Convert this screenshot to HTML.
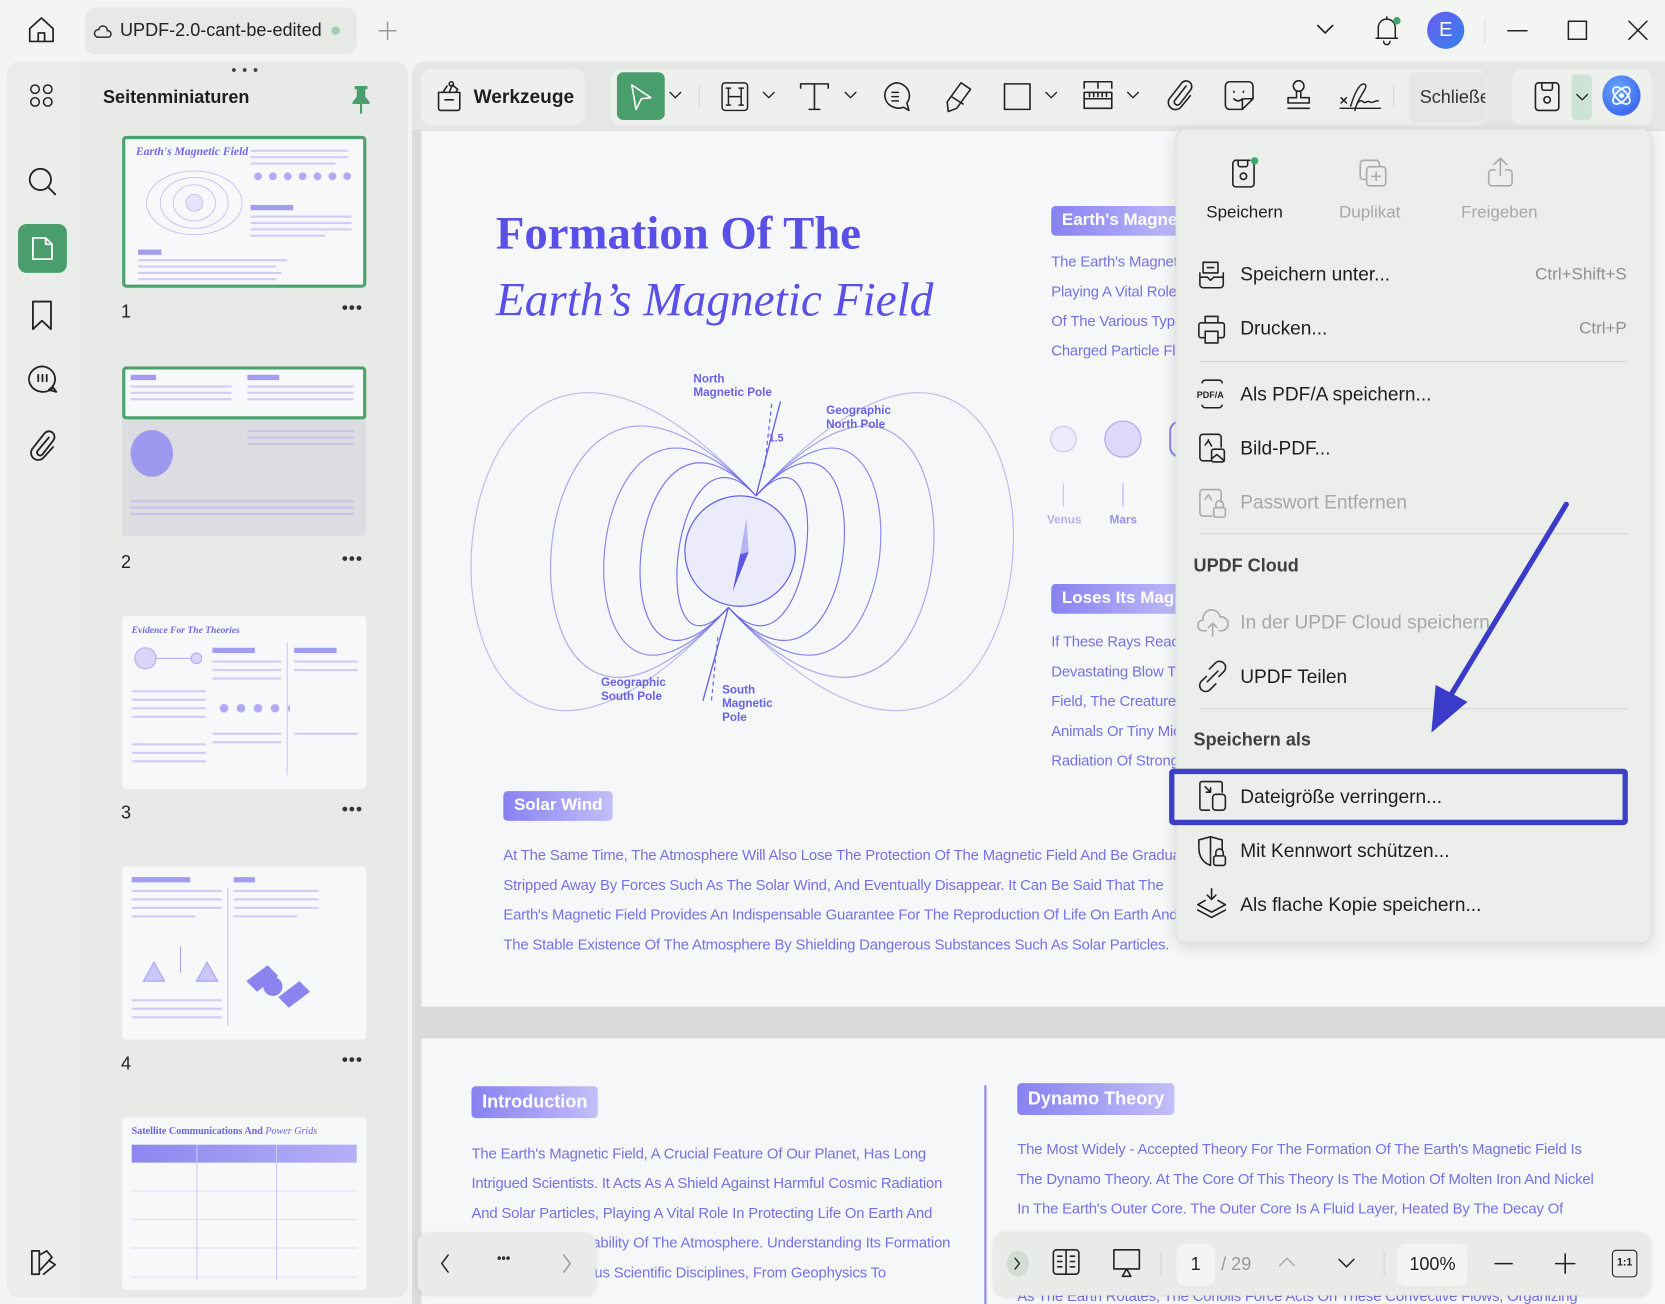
<!DOCTYPE html>
<html><head><meta charset="utf-8">
<style>
*{margin:0;padding:0;box-sizing:border-box}
html,body{width:1665px;height:1304px;overflow:hidden;background:#f3f5f3;font-family:"Liberation Sans",sans-serif}
#w{position:absolute;left:0;top:0;width:1568px;height:1228px;transform:scale(1.06186);transform-origin:0 0;background:#f3f5f3;overflow:hidden}
.a{position:absolute}
.ic{position:absolute;fill:none;stroke:#222;stroke-width:1.6;stroke-linecap:round;stroke-linejoin:round}
.pt{color:#7770e6;font-size:14px;letter-spacing:-0.15px;position:absolute;white-space:nowrap}
.badge{position:absolute;color:#fff;font-weight:bold;font-size:16px;border-radius:4px;padding:5px 10px;background:linear-gradient(90deg,#8881f2,#c3bff8);white-space:nowrap;overflow:hidden}
.mi{position:absolute;left:1168px;font-size:18px;color:#1e1e1e;white-space:nowrap}
.dis{color:#a5a8a5}
.sc{position:absolute;right:36px;font-size:16px;color:#8d908d}
.th{position:absolute;left:115px;width:230px;background:#f7f8fa;border-radius:4px;overflow:hidden}
.num{position:absolute;left:114px;font-size:17px;color:#222}
.dots{position:absolute;left:322px;font-size:16px;font-weight:bold;color:#333;letter-spacing:1px}
.tl{position:absolute;height:2px;background:#cfcdf5}
</style></head><body>
<div id="w">
<!-- top bar -->
<svg class="ic" style="left:25px;top:14px" width="28" height="28" viewBox="0 0 28 28"><path d="M3 13 L14 3 L25 13 V25 H3 Z M11 25 V17 H17 V25"/></svg>
<div class="a" style="left:80px;top:7px;width:256px;height:44px;background:#e6e9e6;border-radius:10px"></div>
<svg class="ic" style="left:88px;top:20px;stroke-width:1.3" width="18" height="18" viewBox="0 0 18 18"><path d="M4 15 H14 A3 3 0 0 0 13 9 A4 4 0 0 0 5 8 A3.5 3.5 0 0 0 4 15Z"/></svg>
<div class="a" style="left:113px;top:19px;font-size:17px;color:#222">UPDF-2.0-cant-be-edited</div>
<div class="a" style="left:312px;top:25px;width:8px;height:8px;border-radius:50%;background:#9ccfae"></div>
<svg class="ic" style="left:355px;top:19px;stroke:#999;stroke-width:1.4" width="20" height="20"><path d="M10 2V18M2 10H18"/></svg>
<svg class="ic" style="left:1239px;top:22px" width="18" height="12"><path d="M2 2 L9 9 L16 2"/></svg>
<svg class="ic" style="left:1293px;top:13px;stroke-width:1.4" width="26" height="32"><path d="M5 23 V13 A8 8 0 0 1 21 13 V23 Z M3 23 H23 M10 26 A3 3 0 0 0 16 26 M13 3V5"/></svg>
<div class="a" style="left:1312px;top:16px;width:7px;height:7px;border-radius:50%;background:#3caa6c"></div>
<div class="a" style="left:1344px;top:11px;width:35px;height:35px;border-radius:50%;background:linear-gradient(135deg,#6b5af2,#3483e8);color:#fff;text-align:center;line-height:35px;font-size:19px">E</div>
<div class="a" style="left:1398px;top:18px;width:1px;height:22px;background:#ddd"></div>
<svg class="ic" style="left:1418px;top:18px;stroke-width:1.4" width="22" height="22"><path d="M2 11H20"/></svg>
<svg class="ic" style="left:1475px;top:18px;stroke-width:1.4" width="22" height="22"><rect x="2" y="2" width="17" height="17"/></svg>
<svg class="ic" style="left:1532px;top:18px;stroke-width:1.4" width="22" height="22"><path d="M2 2L19 19M19 2L2 19"/></svg>

<!-- left panel -->
<div class="a" style="left:6px;top:58px;width:378px;height:1164px;background:#e7eae7;border-radius:12px"></div>
<div class="a" style="left:6px;top:58px;width:70px;height:1164px;background:#eaedea;border-radius:12px 0 0 12px"></div>
<svg class="ic" style="left:27px;top:78px;stroke-width:1.4" width="26" height="26"><rect x="2" y="2" width="8" height="8" rx="4"/><rect x="14" y="2" width="8" height="8" rx="4"/><rect x="2" y="14" width="8" height="8" rx="4"/><rect x="14" y="14" width="8" height="8" rx="4"/></svg>
<svg class="ic" style="left:25px;top:156px;stroke-width:1.7" width="30" height="30"><circle cx="13" cy="13" r="10"/><path d="M20 20L27 27"/></svg>
<div class="a" style="left:17px;top:211px;width:46px;height:46px;background:#4a9e6b;border-radius:8px"></div>
<svg class="ic" style="left:28px;top:221px;stroke:#fff;stroke-width:1.7" width="24" height="26"><path d="M3 3 H15 L21 9 V23 H3 Z M15 3 V9 H21"/></svg>
<svg class="ic" style="left:29px;top:282px;stroke-width:1.7" width="22" height="30"><path d="M2 2 H19 V28 L10.5 20 L2 28 Z"/></svg>
<svg class="ic" style="left:24px;top:342px;stroke-width:1.7" width="32" height="30"><path d="M16 3 A13 12 0 1 0 26 23 L29 27 L22 25 A13 12 0 0 0 16 3Z M12 11V17 M16 11V17 M20 11V17"/></svg>
<svg class="ic" style="left:26px;top:404px;stroke-width:1.7" width="28" height="30"><path d="M20 8 L9 21 A3 3 0 0 0 14 24 L24 11 A5 5 0 0 0 16 4 L5 18 A6.5 6.5 0 0 0 15 27 L24 17"/></svg>
<svg class="ic" style="left:27px;top:1175px;stroke-width:1.6" width="28" height="28"><path d="M3 3 H10 V25 H3 Z M10 7 L17 3 L22 9 L10 22 M14 25 L25 16 L19 12"/></svg>

<div class="a" style="left:218px;top:58px;font-size:13px;font-weight:bold;color:#444;letter-spacing:1px">• • •</div>
<div class="a" style="left:97px;top:82px;font-size:17px;font-weight:bold;color:#1e1e1e">Seitenminiaturen</div>
<svg class="a" style="left:329px;top:79px" width="22" height="30"><path d="M5 2 H17 V5 H15 V12 L19 17 V19 H3 V17 L7 12 V5 H5Z" fill="#4a9e6b"/><path d="M11 19V28" stroke="#4a9e6b" stroke-width="2"/></svg>

<!-- thumbnails -->
<div class="th" style="top:128px;height:143px;border:3px solid #4aa36d">
 <div class="a" style="left:10px;top:6px;font-family:'Liberation Serif',serif;font-style:italic;font-weight:bold;color:#7068e6;font-size:11px">Earth's Magnetic Field</div>
 <svg class="a" style="left:15px;top:20px" width="100" height="80"><g fill="none" stroke="#bab6f3" stroke-width=".7"><ellipse cx="50" cy="40" rx="45" ry="30"/><ellipse cx="50" cy="40" rx="32" ry="24"/><ellipse cx="50" cy="40" rx="20" ry="17"/><circle cx="50" cy="40" r="8" fill="#e6e4fb"/></g></svg>
 <div class="tl" style="left:118px;top:10px;width:92px"></div><div class="tl" style="left:118px;top:16px;width:92px"></div><div class="tl" style="left:118px;top:22px;width:80px"></div>
 <div class="a" style="left:118px;top:30px;width:100px;height:10px;background:radial-gradient(circle,#b0abf3 40%,transparent 45%) 0 0/14px 10px"></div>
 <div class="a" style="left:118px;top:62px;width:40px;height:5px;background:#a39df2"></div>
 <div class="tl" style="left:118px;top:72px;width:95px"></div><div class="tl" style="left:118px;top:78px;width:95px"></div><div class="tl" style="left:118px;top:84px;width:95px"></div><div class="tl" style="left:118px;top:90px;width:70px"></div>
 <div class="a" style="left:12px;top:104px;width:22px;height:5px;background:#a39df2"></div>
 <div class="tl" style="left:12px;top:113px;width:140px"></div><div class="tl" style="left:12px;top:119px;width:130px"></div><div class="tl" style="left:12px;top:125px;width:135px"></div><div class="tl" style="left:12px;top:131px;width:130px"></div>
</div>
<div class="num" style="top:284px">1</div><div class="dots" style="top:282px">•••</div>

<div class="th" style="top:345px;height:160px;background:#dcdde0">
 <div class="a" style="left:0;top:0;width:230px;height:50px;background:#f7f8fa;border:3px solid #4aa36d;border-radius:4px"></div>
 <div class="a" style="left:8px;top:8px;width:24px;height:5px;background:#a39df2"></div><div class="a" style="left:118px;top:8px;width:30px;height:5px;background:#a39df2"></div>
 <div class="tl" style="left:8px;top:18px;width:95px"></div><div class="tl" style="left:8px;top:24px;width:95px"></div><div class="tl" style="left:8px;top:30px;width:95px"></div><div class="tl" style="left:118px;top:18px;width:100px"></div><div class="tl" style="left:118px;top:24px;width:100px"></div><div class="tl" style="left:118px;top:30px;width:100px"></div>
 <div class="a" style="left:8px;top:60px;width:40px;height:44px;border-radius:50%;background:#9e98ee"></div>
 <div class="tl" style="left:118px;top:60px;width:100px;background:#c5c3e8"></div><div class="tl" style="left:118px;top:66px;width:100px;background:#c5c3e8"></div><div class="tl" style="left:118px;top:72px;width:100px;background:#c5c3e8"></div>
 <div class="tl" style="left:8px;top:126px;width:210px;background:#c5c3e8"></div><div class="tl" style="left:8px;top:132px;width:210px;background:#c5c3e8"></div><div class="tl" style="left:8px;top:138px;width:210px;background:#c5c3e8"></div>
</div>
<div class="num" style="top:520px">2</div><div class="dots" style="top:518px">•••</div>

<div class="th" style="top:580px;height:163px">
 <div class="a" style="left:9px;top:8px;font-family:'Liberation Serif',serif;font-style:italic;font-weight:bold;color:#7068e6;font-size:9px">Evidence For The Theories</div>
 <svg class="a" style="left:10px;top:25px" width="70" height="30"><g stroke="#b0abf3" fill="#d9d6fa"><circle cx="12" cy="15" r="10"/><circle cx="60" cy="15" r="5"/><path d="M22 15H55"/></g></svg>
 <div class="tl" style="left:9px;top:70px;width:70px"></div><div class="tl" style="left:9px;top:78px;width:70px"></div><div class="tl" style="left:9px;top:86px;width:70px"></div><div class="tl" style="left:9px;top:94px;width:70px"></div><div class="tl" style="left:9px;top:120px;width:70px"></div><div class="tl" style="left:9px;top:128px;width:70px"></div><div class="tl" style="left:9px;top:136px;width:70px"></div>
 <div class="a" style="left:85px;top:30px;width:40px;height:5px;background:#a39df2"></div><div class="a" style="left:162px;top:30px;width:40px;height:5px;background:#a39df2"></div>
 <div class="tl" style="left:85px;top:42px;width:65px"></div><div class="tl" style="left:85px;top:50px;width:65px"></div><div class="tl" style="left:85px;top:58px;width:65px"></div><div class="tl" style="left:162px;top:42px;width:60px"></div><div class="tl" style="left:162px;top:50px;width:60px"></div>
 <div class="a" style="left:88px;top:82px;width:70px;height:10px;background:radial-gradient(circle,#b0abf3 40%,transparent 45%) 0 0/16px 10px"></div>
 <div class="tl" style="left:85px;top:110px;width:65px"></div><div class="tl" style="left:85px;top:118px;width:65px"></div><div class="tl" style="left:162px;top:110px;width:60px"></div>
 <div class="a" style="left:155px;top:25px;width:1px;height:125px;background:#c9c6f5"></div>
</div>
<div class="num" style="top:756px">3</div><div class="dots" style="top:754px">•••</div>

<div class="th" style="top:816px;height:163px">
 <div class="a" style="left:9px;top:10px;width:55px;height:5px;background:#a39df2"></div><div class="a" style="left:105px;top:10px;width:20px;height:5px;background:#a39df2"></div>
 <div class="tl" style="left:9px;top:22px;width:85px"></div><div class="tl" style="left:9px;top:30px;width:85px"></div><div class="tl" style="left:9px;top:38px;width:85px"></div><div class="tl" style="left:9px;top:46px;width:60px"></div>
 <div class="tl" style="left:105px;top:22px;width:80px"></div><div class="tl" style="left:105px;top:30px;width:80px"></div><div class="tl" style="left:105px;top:38px;width:80px"></div><div class="tl" style="left:105px;top:46px;width:60px"></div>
 <svg class="a" style="left:15px;top:70px" width="80" height="40"><g stroke="#a8a3f2" fill="#c9c6f8"><path d="M5 38 L15 20 L25 38Z M55 38 L65 20 L75 38Z M40 5 V30"/></g></svg>
 <div class="tl" style="left:9px;top:125px;width:85px"></div><div class="tl" style="left:9px;top:133px;width:85px"></div><div class="tl" style="left:9px;top:141px;width:85px"></div>
 <div class="a" style="left:99px;top:20px;width:1px;height:130px;background:#c9c6f5"></div>
 <svg class="a" style="left:112px;top:88px" width="70" height="60"><g fill="#8b84ee"><path d="M5 20 L25 5 L35 15 L15 30Z M35 35 L55 20 L65 30 L45 45Z"/><circle cx="30" cy="25" r="9"/></g></svg>
</div>
<div class="num" style="top:992px">4</div><div class="dots" style="top:990px">•••</div>

<div class="th" style="top:1052px;height:163px">
 <div class="a" style="left:9px;top:9px;font-family:'Liberation Serif',serif;font-weight:bold;color:#6d64e6;font-size:9.5px">Satellite Communications And <i style="font-weight:normal">Power Grids</i></div>
 <div class="a" style="left:9px;top:26px;width:212px;height:17px;background:linear-gradient(90deg,#8d86f0,#b5b0f7)"></div>
 <div class="a" style="left:9px;top:43px;width:212px;height:112px;background:repeating-linear-gradient(180deg,#f7f8fa 0,#f7f8fa 26px,#dedcf8 26px,#dedcf8 27px)"></div>
 <div class="a" style="left:70px;top:26px;width:1px;height:128px;background:#cdcaf6"></div><div class="a" style="left:145px;top:26px;width:1px;height:128px;background:#cdcaf6"></div>
</div>

<!-- main area -->
<div class="a" style="left:388px;top:58px;width:1180px;height:1170px;background:#dadcda;border-radius:12px 0 0 0"></div>
<div class="a" style="left:388px;top:58px;width:1180px;height:64px;background:#e4e7e4;border-radius:12px 0 0 0"></div>
<div class="a" style="left:396px;top:65px;width:155px;height:53px;background:#eef0ee;border-radius:10px"></div>
<svg class="ic" style="left:409px;top:75px;stroke-width:1.5" width="30" height="32"><path d="M4 12 H24 V27 A2 2 0 0 1 22 29 H6 A2 2 0 0 1 4 27 Z M10 19 H18 M8 12 L12 6 M14 12 L17 5 L22 9 L20 12"/><circle cx="16" cy="4" r="2"/></svg>
<div class="a" style="left:446px;top:81px;font-size:18px;font-weight:bold;color:#1e1e1e">Werkzeuge</div>
<div class="a" style="left:575px;top:65px;width:825px;height:53px;background:#eef0ee;border-radius:10px"></div>
<div class="a" style="left:581px;top:68px;width:45px;height:45px;background:#4a9e6b;border-radius:6px"></div>
<svg class="ic" style="left:591px;top:77px;stroke:#fff;stroke-width:1.5" width="26" height="28"><path d="M4 3 L22 15 L13 16 L8 26 Z"/></svg>
<svg class="ic" style="left:630px;top:86px;stroke-width:1.3" width="12" height="8"><path d="M1 1L6 6L11 1"/></svg>
<div class="a" style="left:658px;top:80px;width:1px;height:22px;background:#d6d8d6"></div>
<svg class="ic" style="left:678px;top:76px;stroke-width:1.4" width="28" height="30"><rect x="2" y="2" width="24" height="26" rx="3"/><path d="M8 7V23M20 7V23M8 15H20M6 7H10M18 7H22M6 23H10M18 23H22"/></svg>
<svg class="ic" style="left:718px;top:86px;stroke-width:1.3" width="12" height="8"><path d="M1 1L6 6L11 1"/></svg>
<svg class="ic" style="left:752px;top:77px;stroke-width:1.5" width="30" height="28"><path d="M2 6V2H28V6M15 2V26M10 26H20"/></svg>
<svg class="ic" style="left:795px;top:86px;stroke-width:1.3" width="12" height="8"><path d="M1 1L6 6L11 1"/></svg>
<svg class="ic" style="left:829px;top:76px;stroke-width:1.5" width="30" height="30"><path d="M15 2 A13 12 0 1 0 22 25 L27 28 L25 21 A13 12 0 0 0 15 2Z M11 11H17M11 15H17M11 19H17"/></svg>
<svg class="ic" style="left:887px;top:75px;stroke-width:1.5" width="30" height="32"><path d="M18 3 L27 9 L14 27 L6 30 L5 21 Z M9 16 L20 23"/></svg>
<svg class="ic" style="left:944px;top:77px;stroke-width:1.5" width="28" height="28"><rect x="2" y="2" width="24" height="24"/></svg>
<svg class="ic" style="left:984px;top:86px;stroke-width:1.3" width="12" height="8"><path d="M1 1L6 6L11 1"/></svg>
<svg class="ic" style="left:1018px;top:75px;stroke-width:1.5" width="32" height="30"><path d="M3 2H29M3 2V8M29 2V8M16 2V8M3 12H29V27H3ZM3 18H29M8 12V16M12 12V16M16 12V16M20 12V16M24 12V16"/></svg>
<svg class="ic" style="left:1061px;top:86px;stroke-width:1.3" width="12" height="8"><path d="M1 1L6 6L11 1"/></svg>
<svg class="ic" style="left:1097px;top:75px;stroke-width:1.5" width="28" height="32"><path d="M20 6 L9 20 A3 3 0 0 0 14 23 L24 10 A5 5 0 0 0 16 3 L5 17 A6.5 6.5 0 0 0 15 26 L24 15"/></svg>
<svg class="ic" style="left:1152px;top:75px;stroke-width:1.5" width="30" height="30"><path d="M6 2 H24 A4 4 0 0 1 28 6 V18 L18 28 H6 A4 4 0 0 1 2 24 V6 A4 4 0 0 1 6 2Z M18 28 V20 A2 2 0 0 1 20 18 H28 M10 11V12 M19 11V12 M10 18 Q14 22 18 18"/></svg>
<svg class="ic" style="left:1209px;top:74px;stroke-width:1.5" width="28" height="32"><circle cx="14" cy="7" r="5"/><path d="M12 12 V18 H4 V23 H24 V18 H16 V12 M4 28 H24"/></svg>
<svg class="ic" style="left:1260px;top:76px;stroke-width:1.4" width="42" height="30"><path d="M3 16L8 21M8 16L3 21 M12 24 C16 10 22 0 26 4 C28 8 18 16 16 28 C18 18 22 18 24 20 C26 22 28 18 30 20 C32 22 36 18 38 19 M2 26H40"/></svg>
<div class="a" style="left:1312px;top:80px;width:1px;height:22px;background:#d6d8d6"></div>
<div class="a" style="left:1327px;top:68px;width:72px;height:47px;background:#e4e7e4;border-radius:6px;overflow:hidden"><div style="padding:14px 0 0 10px;font-size:17px;color:#333;white-space:nowrap">Schließen</div></div>
<div class="a" style="left:1424px;top:65px;width:132px;height:53px;background:#eef0ee;border-radius:10px"></div>
<svg class="ic" style="left:1443px;top:75px;stroke-width:1.5" width="28" height="32"><path d="M6 3 H22 A3 3 0 0 1 25 6 V26 A3 3 0 0 1 22 29 H6 A3 3 0 0 1 3 26 V6 A3 3 0 0 1 6 3Z M9 3 V8 A2 2 0 0 0 11 10 H17 A2 2 0 0 0 19 8 V3"/><circle cx="14" cy="19" r="3"/></svg>
<div class="a" style="left:1480px;top:70px;width:19px;height:43px;background:#cde3d5;border-radius:4px"></div>
<svg class="ic" style="left:1484px;top:88px;stroke-width:1.3" width="12" height="8"><path d="M1 1L6 6L11 1"/></svg>
<div class="a" style="left:1509px;top:71px;width:36px;height:38px;border-radius:50%;background:radial-gradient(circle at 40% 35%,#67a9ff,#3f6cf0 70%,#7a6cf5)"></div>
<svg class="ic" style="left:1514px;top:77px;stroke:#fff;stroke-width:1.6" width="26" height="26"><ellipse cx="13" cy="13" rx="10" ry="5" transform="rotate(45 13 13)"/><ellipse cx="13" cy="13" rx="10" ry="5" transform="rotate(-45 13 13)"/><circle cx="13" cy="13" r="1.5" fill="#fff"/></svg>

<!-- page 1 -->
<div class="a" style="left:397px;top:123px;width:1171px;height:825px;background:#f6f7f8"></div>
<div class="a" style="left:467px;top:194px;font-family:'Liberation Serif',serif;font-weight:bold;font-size:44px;color:#5a50e8;white-space:nowrap">Formation Of The</div>
<div class="a" style="left:467px;top:256px;font-family:'Liberation Serif',serif;font-style:italic;font-size:44.5px;color:#5a50e8;white-space:nowrap">Earth’s Magnetic Field</div>
<svg class="a" style="left:430px;top:340px" width="540" height="370" viewBox="430 340 540 370">
 <g fill="none" stroke="#6a62e6" stroke-width="1.1">
  <path d="M712 467 C792 379 766 660 686 572" opacity=".9"/>
  <path d="M712 467 C839 327 813 712 686 572" opacity=".85"/>
  <path d="M712 467 C885 277 859 762 686 572" opacity=".75"/>
  <path d="M712 467 C952 203 926 836 686 572" opacity=".55"/>
  <path d="M712 467 C1052 93 1026 946 686 572" opacity=".4"/>
  <path d="M712 467 C632 379 606 660 686 572" opacity=".9"/>
  <path d="M712 467 C585 327 559 712 686 572" opacity=".85"/>
  <path d="M712 467 C539 277 513 762 686 572" opacity=".75"/>
  <path d="M712 467 C472 203 446 836 686 572" opacity=".55"/>
  <path d="M712 467 C372 93 346 946 686 572" opacity=".4"/>
  <path d="M712 467 L735 378 M686 572 L662 660" stroke-width="1.3"/>
  <path d="M720 440 L727 378 M676 600 L670 660" stroke-dasharray="4 3"/>
 </g>
 <circle cx="697" cy="519" r="52" fill="#ebebfb" stroke="#6a62e6" stroke-width="1.2"/>
 <path d="M703 488 L697 522 L705 520Z" fill="#b7b2f5"/><path d="M697 522 L705 520 L690 557Z" fill="#5d54e8"/>
 <g font-family="Liberation Sans,sans-serif" font-weight="bold" font-size="11" fill="#6a62e6">
  <text x="653" y="360">North</text><text x="653" y="373">Magnetic Pole</text>
  <text x="778" y="390">Geographic</text><text x="778" y="403">North Pole</text>
  <text x="724" y="416" font-size="10">1.5</text>
  <text x="566" y="646">Geographic</text><text x="566" y="659">South Pole</text>
  <text x="680" y="653">South</text><text x="680" y="666">Magnetic</text><text x="680" y="679">Pole</text>
 </g>
</svg>
<div class="badge" style="left:990px;top:194px;width:130px">Earth's Magnetic</div>
<div class="pt" style="left:990px;top:238px">The Earth's Magnetic</div>
<div class="pt" style="left:990px;top:266px">Playing A Vital Role</div>
<div class="pt" style="left:990px;top:294px">Of The Various Types</div>
<div class="pt" style="left:990px;top:322px">Charged Particle Fl</div>
<div class="a" style="left:989px;top:401px;width:25px;height:25px;border-radius:50%;background:#eceafc;border:1.5px solid #c7c3f5"></div>
<div class="a" style="left:1040px;top:396px;width:35px;height:35px;border-radius:50%;background:#dcd9fa;border:1.5px solid #a9a3f2"></div>
<div class="a" style="left:1101px;top:396px;width:10px;height:35px;border-radius:35px 0 0 35px;border:2px solid #8d86ee;border-right:none"></div>
<div class="a" style="left:1001px;top:455px;width:1px;height:22px;background:#c7c3f5"></div>
<div class="a" style="left:1057px;top:455px;width:1px;height:22px;background:#b0abf3"></div>
<div class="a" style="left:986px;top:484px;font-size:11px;color:#b5b1f2;font-weight:bold">Venus</div>
<div class="a" style="left:1045px;top:484px;font-size:11px;color:#9892ee;font-weight:bold">Mars</div>
<div class="badge" style="left:990px;top:550px;width:130px">Loses Its Magnetic</div>
<div class="pt" style="left:990px;top:596px">If These Rays Reach</div>
<div class="pt" style="left:990px;top:624px">Devastating Blow T</div>
<div class="pt" style="left:990px;top:652px">Field, The Creature</div>
<div class="pt" style="left:990px;top:680px">Animals Or Tiny Mic</div>
<div class="pt" style="left:990px;top:708px">Radiation Of Strong</div>
<div class="badge" style="left:474px;top:745px">Solar Wind</div>
<div class="pt" style="left:474px;top:797px">At The Same Time, The Atmosphere Will Also Lose The Protection Of The Magnetic Field And Be Gradually</div>
<div class="pt" style="left:474px;top:825px">Stripped Away By Forces Such As The Solar Wind, And Eventually Disappear. It Can Be Said That The</div>
<div class="pt" style="left:474px;top:853px">Earth's Magnetic Field Provides An Indispensable Guarantee For The Reproduction Of Life On Earth And</div>
<div class="pt" style="left:474px;top:881px">The Stable Existence Of The Atmosphere By Shielding Dangerous Substances Such As Solar Particles.</div>

<!-- page 2 -->
<div class="a" style="left:397px;top:978px;width:1171px;height:250px;background:#f6f7f8"></div>
<div class="badge" style="left:444px;top:1023px;font-size:17px">Introduction</div>
<div class="pt" style="left:444px;top:1078px">The Earth's Magnetic Field, A Crucial Feature Of Our Planet, Has Long</div>
<div class="pt" style="left:444px;top:1106px">Intrigued Scientists. It Acts As A Shield Against Harmful Cosmic Radiation</div>
<div class="pt" style="left:444px;top:1134px">And Solar Particles, Playing A Vital Role In Protecting Life On Earth And</div>
<div class="pt" style="left:444px;top:1162px">Maintaining The Stability Of The Atmosphere. Understanding Its Formation</div>
<div class="pt" style="left:444px;top:1190px">Is Crucial For Various Scientific Disciplines, From Geophysics To</div>
<div class="a" style="left:927px;top:1022px;width:1.5px;height:206px;background:#8d86ee"></div>
<div class="badge" style="left:958px;top:1020px;font-size:17px">Dynamo Theory</div>
<div class="pt" style="left:958px;top:1074px">The Most Widely - Accepted Theory For The Formation Of The Earth's Magnetic Field Is</div>
<div class="pt" style="left:958px;top:1102px">The Dynamo Theory. At The Core Of This Theory Is The Motion Of Molten Iron And Nickel</div>
<div class="pt" style="left:958px;top:1130px">In The Earth's Outer Core. The Outer Core Is A Fluid Layer, Heated By The Decay Of</div>
<div class="pt" style="left:958px;top:1212px">As The Earth Rotates, The Coriolis Force Acts On These Convective Flows, Organizing</div>

<!-- bottom bars -->
<div class="a" style="left:393px;top:1161px;width:168px;height:58px;background:#e8ebe8;border-radius:10px;box-shadow:0 1px 4px rgba(0,0,0,.1)"></div>
<svg class="ic" style="left:413px;top:1180px;stroke-width:1.4" width="12" height="20"><path d="M9 2L3 10L9 18"/></svg>
<div class="a" style="left:468px;top:1178px;font-size:12px;font-weight:bold;color:#333">•••</div>
<svg class="ic" style="left:528px;top:1180px;stroke:#999;stroke-width:1.4" width="12" height="20"><path d="M3 2L9 10L3 18"/></svg>

<div class="a" style="left:936px;top:1160px;width:618px;height:60px;background:#e8ebe8;border-radius:12px;box-shadow:0 1px 4px rgba(0,0,0,.1)"></div>
<div class="a" style="left:948px;top:1178px;width:21px;height:24px;border-radius:50%;background:#d2dbd4"></div>
<svg class="ic" style="left:953px;top:1183px;stroke-width:1.3" width="10" height="14"><path d="M3 2L7 7L3 12"/></svg>
<svg class="ic" style="left:989px;top:1174px;stroke-width:1.5" width="30" height="30"><rect x="3" y="3" width="24" height="23" rx="3"/><path d="M15 3V26M7 9H11M7 14H11M7 19H11M19 9H23M19 14H23M19 19H23"/></svg>
<svg class="ic" style="left:1045px;top:1174px;stroke-width:1.5" width="32" height="32"><path d="M4 3H28V21H4Z M16 21 L12 28 H20 Z"/></svg>
<div class="a" style="left:1093px;top:1178px;width:1px;height:24px;background:#d2d4d2"></div>
<div class="a" style="left:1108px;top:1171px;width:36px;height:40px;background:#f3f5f3;border-radius:8px;text-align:center;line-height:40px;font-size:17px;color:#222">1</div>
<div class="a" style="left:1150px;top:1181px;font-size:17px;color:#999">/ 29</div>
<svg class="ic" style="left:1203px;top:1182px;stroke:#aaa;stroke-width:1.4" width="18" height="12"><path d="M2 10L9 3L16 10"/></svg>
<svg class="ic" style="left:1259px;top:1184px;stroke-width:1.4" width="18" height="12"><path d="M2 2L9 9L16 2"/></svg>
<div class="a" style="left:1303px;top:1178px;width:1px;height:24px;background:#d2d4d2"></div>
<div class="a" style="left:1316px;top:1171px;width:66px;height:40px;background:#f3f5f3;border-radius:8px;text-align:center;line-height:40px;font-size:17px;color:#222">100%</div>
<svg class="ic" style="left:1406px;top:1180px;stroke-width:1.5" width="20" height="20"><path d="M2 10H18"/></svg>
<svg class="ic" style="left:1463px;top:1179px;stroke-width:1.5" width="22" height="22"><path d="M2 11H20M11 2V20"/></svg>
<div class="a" style="left:1518px;top:1177px;width:24px;height:26px;border:1.6px solid #222;border-radius:4px;font-size:10px;text-align:center;line-height:23px;font-weight:bold;color:#222">1:1</div>

<!-- menu -->
<div class="a" style="left:1107px;top:121px;width:449px;height:767px;background:#ebeeeb;border:1px solid #dcdfdc;border-radius:10px;box-shadow:0 4px 14px rgba(0,0,0,.12)"></div>
<svg class="ic" style="left:1158px;top:148px;stroke-width:1.5" width="28" height="30"><path d="M5 3 H19 M23 7 V25 A3 3 0 0 1 20 28 H6 A3 3 0 0 1 3 25 V6 A3 3 0 0 1 6 3 M8 3 V7 A2 2 0 0 0 10 9 H15 A2 2 0 0 0 17 7 V4"/><circle cx="13" cy="18" r="3"/></svg>
<div class="a" style="left:1178px;top:148px;width:7px;height:7px;border-radius:50%;background:#3caa6c"></div>
<svg class="ic" style="left:1278px;top:148px;stroke:#aaa;stroke-width:1.5" width="30" height="30"><path d="M9 21 H6 A3 3 0 0 1 3 18 V6 A3 3 0 0 1 6 3 H18 A3 3 0 0 1 21 6 V9"/><rect x="9" y="9" width="18" height="18" rx="3"/><path d="M18 14V22M14 18H22"/></svg>
<svg class="ic" style="left:1399px;top:146px;stroke:#aaa;stroke-width:1.5" width="28" height="32"><path d="M14 3V19M8 9L14 3L20 9M9 14H6A3 3 0 0 0 3 17V26A3 3 0 0 0 6 29H22A3 3 0 0 0 25 26V17A3 3 0 0 0 22 14H19"/></svg>
<div class="a" style="left:1136px;top:192px;font-size:16px;color:#1e1e1e">Speichern</div>
<div class="a" style="left:1261px;top:192px;font-size:16px;color:#a5a8a5">Duplikat</div>
<div class="a" style="left:1376px;top:192px;font-size:16px;color:#a5a8a5">Freigeben</div>

<svg class="ic" style="left:1127px;top:243px;stroke-width:1.5" width="30" height="32"><path d="M6 4H20V14H6Z M10 9H16M3 14V25A3 3 0 0 0 6 28H22A3 3 0 0 0 25 25V14 M3 18H10L13 21L16 18H25"/></svg>
<div class="mi" style="top:248px">Speichern unter...</div><div class="sc" style="top:250px">Ctrl+Shift+S</div>
<svg class="ic" style="left:1127px;top:294px;stroke-width:1.5" width="30" height="32"><path d="M8 10V4H20V10 M7 24H4A2 2 0 0 1 2 22V12A2 2 0 0 1 4 10H24A2 2 0 0 1 26 12V22A2 2 0 0 1 24 24H21 M8 18H20V29H8Z"/></svg>
<div class="mi" style="top:299px">Drucken...</div><div class="sc" style="top:301px">Ctrl+P</div>
<div class="a" style="left:1130px;top:340px;width:403px;height:1px;background:#d4d7d4"></div>
<svg class="a" style="left:1126px;top:355px" width="30" height="32"><path d="M6 6A3 3 0 0 1 9 3H22A3 3 0 0 1 25 6 M6 26A3 3 0 0 0 9 29H22A3 3 0 0 0 25 26" fill="none" stroke="#222" stroke-width="1.5"/><text x="1" y="20" font-family="Liberation Sans,sans-serif" font-size="8.5" font-weight="bold" fill="#222">PDF/A</text></svg>
<div class="mi" style="top:361px">Als PDF/A speichern...</div>
<svg class="ic" style="left:1127px;top:406px;stroke-width:1.5" width="30" height="32"><path d="M14 28H6A3 3 0 0 1 3 25V6A3 3 0 0 1 6 3H20A3 3 0 0 1 23 6V15 M8 13L11 9L14 14 M11 9V8"/><rect x="14" y="17" width="12" height="12" rx="2"/><path d="M14 26L19 22L26 28"/></svg>
<div class="mi" style="top:412px">Bild-PDF...</div>
<svg class="ic" style="left:1127px;top:458px;stroke:#aaa;stroke-width:1.5" width="30" height="32"><path d="M14 28H6A3 3 0 0 1 3 25V6A3 3 0 0 1 6 3H20A3 3 0 0 1 23 6V15 M8 12L11 8L14 13"/><rect x="16" y="20" width="11" height="9" rx="2"/><path d="M18 20V17A3.5 3.5 0 0 1 25 17V20"/></svg>
<div class="mi dis" style="top:463px">Passwort Entfernen</div>
<div class="a" style="left:1130px;top:502px;width:403px;height:1px;background:#d4d7d4"></div>
<div class="a" style="left:1124px;top:523px;font-size:17px;font-weight:bold;color:#3e423e">UPDF Cloud</div>
<svg class="ic" style="left:1126px;top:570px;stroke:#aaa;stroke-width:1.5" width="32" height="32"><path d="M10 24H7A5 5 0 0 1 7 14A8 8 0 0 1 23 11A6 6 0 0 1 25 24H22 M16 29V17M12 21L16 17L20 21"/></svg>
<div class="mi dis" style="top:576px">In der UPDF Cloud speichern</div>
<svg class="ic" style="left:1127px;top:622px;stroke-width:1.5" width="30" height="30"><path d="M12 8L17 3A5 5 0 0 1 26 10L21 15 M18 22L13 27A5 5 0 0 1 4 20L9 15 M10 20L20 10"/></svg>
<div class="mi" style="top:627px">UPDF Teilen</div>
<div class="a" style="left:1130px;top:667px;width:403px;height:1px;background:#d4d7d4"></div>
<div class="a" style="left:1124px;top:687px;font-size:17px;font-weight:bold;color:#3e423e">Speichern als</div>
<div class="a" style="left:1101px;top:724px;width:432px;height:53px;border:5px solid #3d40c6;border-radius:4px;background:#ebeeeb"></div>
<svg class="ic" style="left:1127px;top:733px;stroke-width:1.5" width="30" height="34"><path d="M12 30H5A2 2 0 0 1 3 28V5A2 2 0 0 1 5 3H22A2 2 0 0 1 24 5V13 M8 8L13 13M13 9V13H9"/><rect x="15" y="15" width="12" height="15" rx="3"/></svg>
<div class="mi" style="top:740px">Dateigröße verringern...</div>
<svg class="ic" style="left:1126px;top:786px;stroke-width:1.5" width="32" height="32"><path d="M14 29C6 26 3 20 3 12V5L14 2V29 M14 2L25 5V14"/><rect x="17" y="20" width="11" height="9" rx="2"/><path d="M19 20V17A3.5 3.5 0 0 1 26 17V20"/></svg>
<div class="mi" style="top:791px">Mit Kennwort schützen...</div>
<svg class="ic" style="left:1125px;top:835px;stroke-width:1.5" width="32" height="32"><path d="M16 2V12M12 8L16 12L20 8 M10 13L3 17L16 24L29 17L22 13 M3 22L16 29L29 22"/></svg>
<div class="mi" style="top:842px">Als flache Kopie speichern...</div>

<!-- arrow -->
<svg class="a" style="left:1330px;top:465px" width="160" height="240"><path d="M145 10 L30 200" stroke="#3b3bc9" stroke-width="5" stroke-linecap="round"/><path d="M18 225 L22 180 L52 196 Z" fill="#3b3bc9"/></svg>
</div>
</body></html>
